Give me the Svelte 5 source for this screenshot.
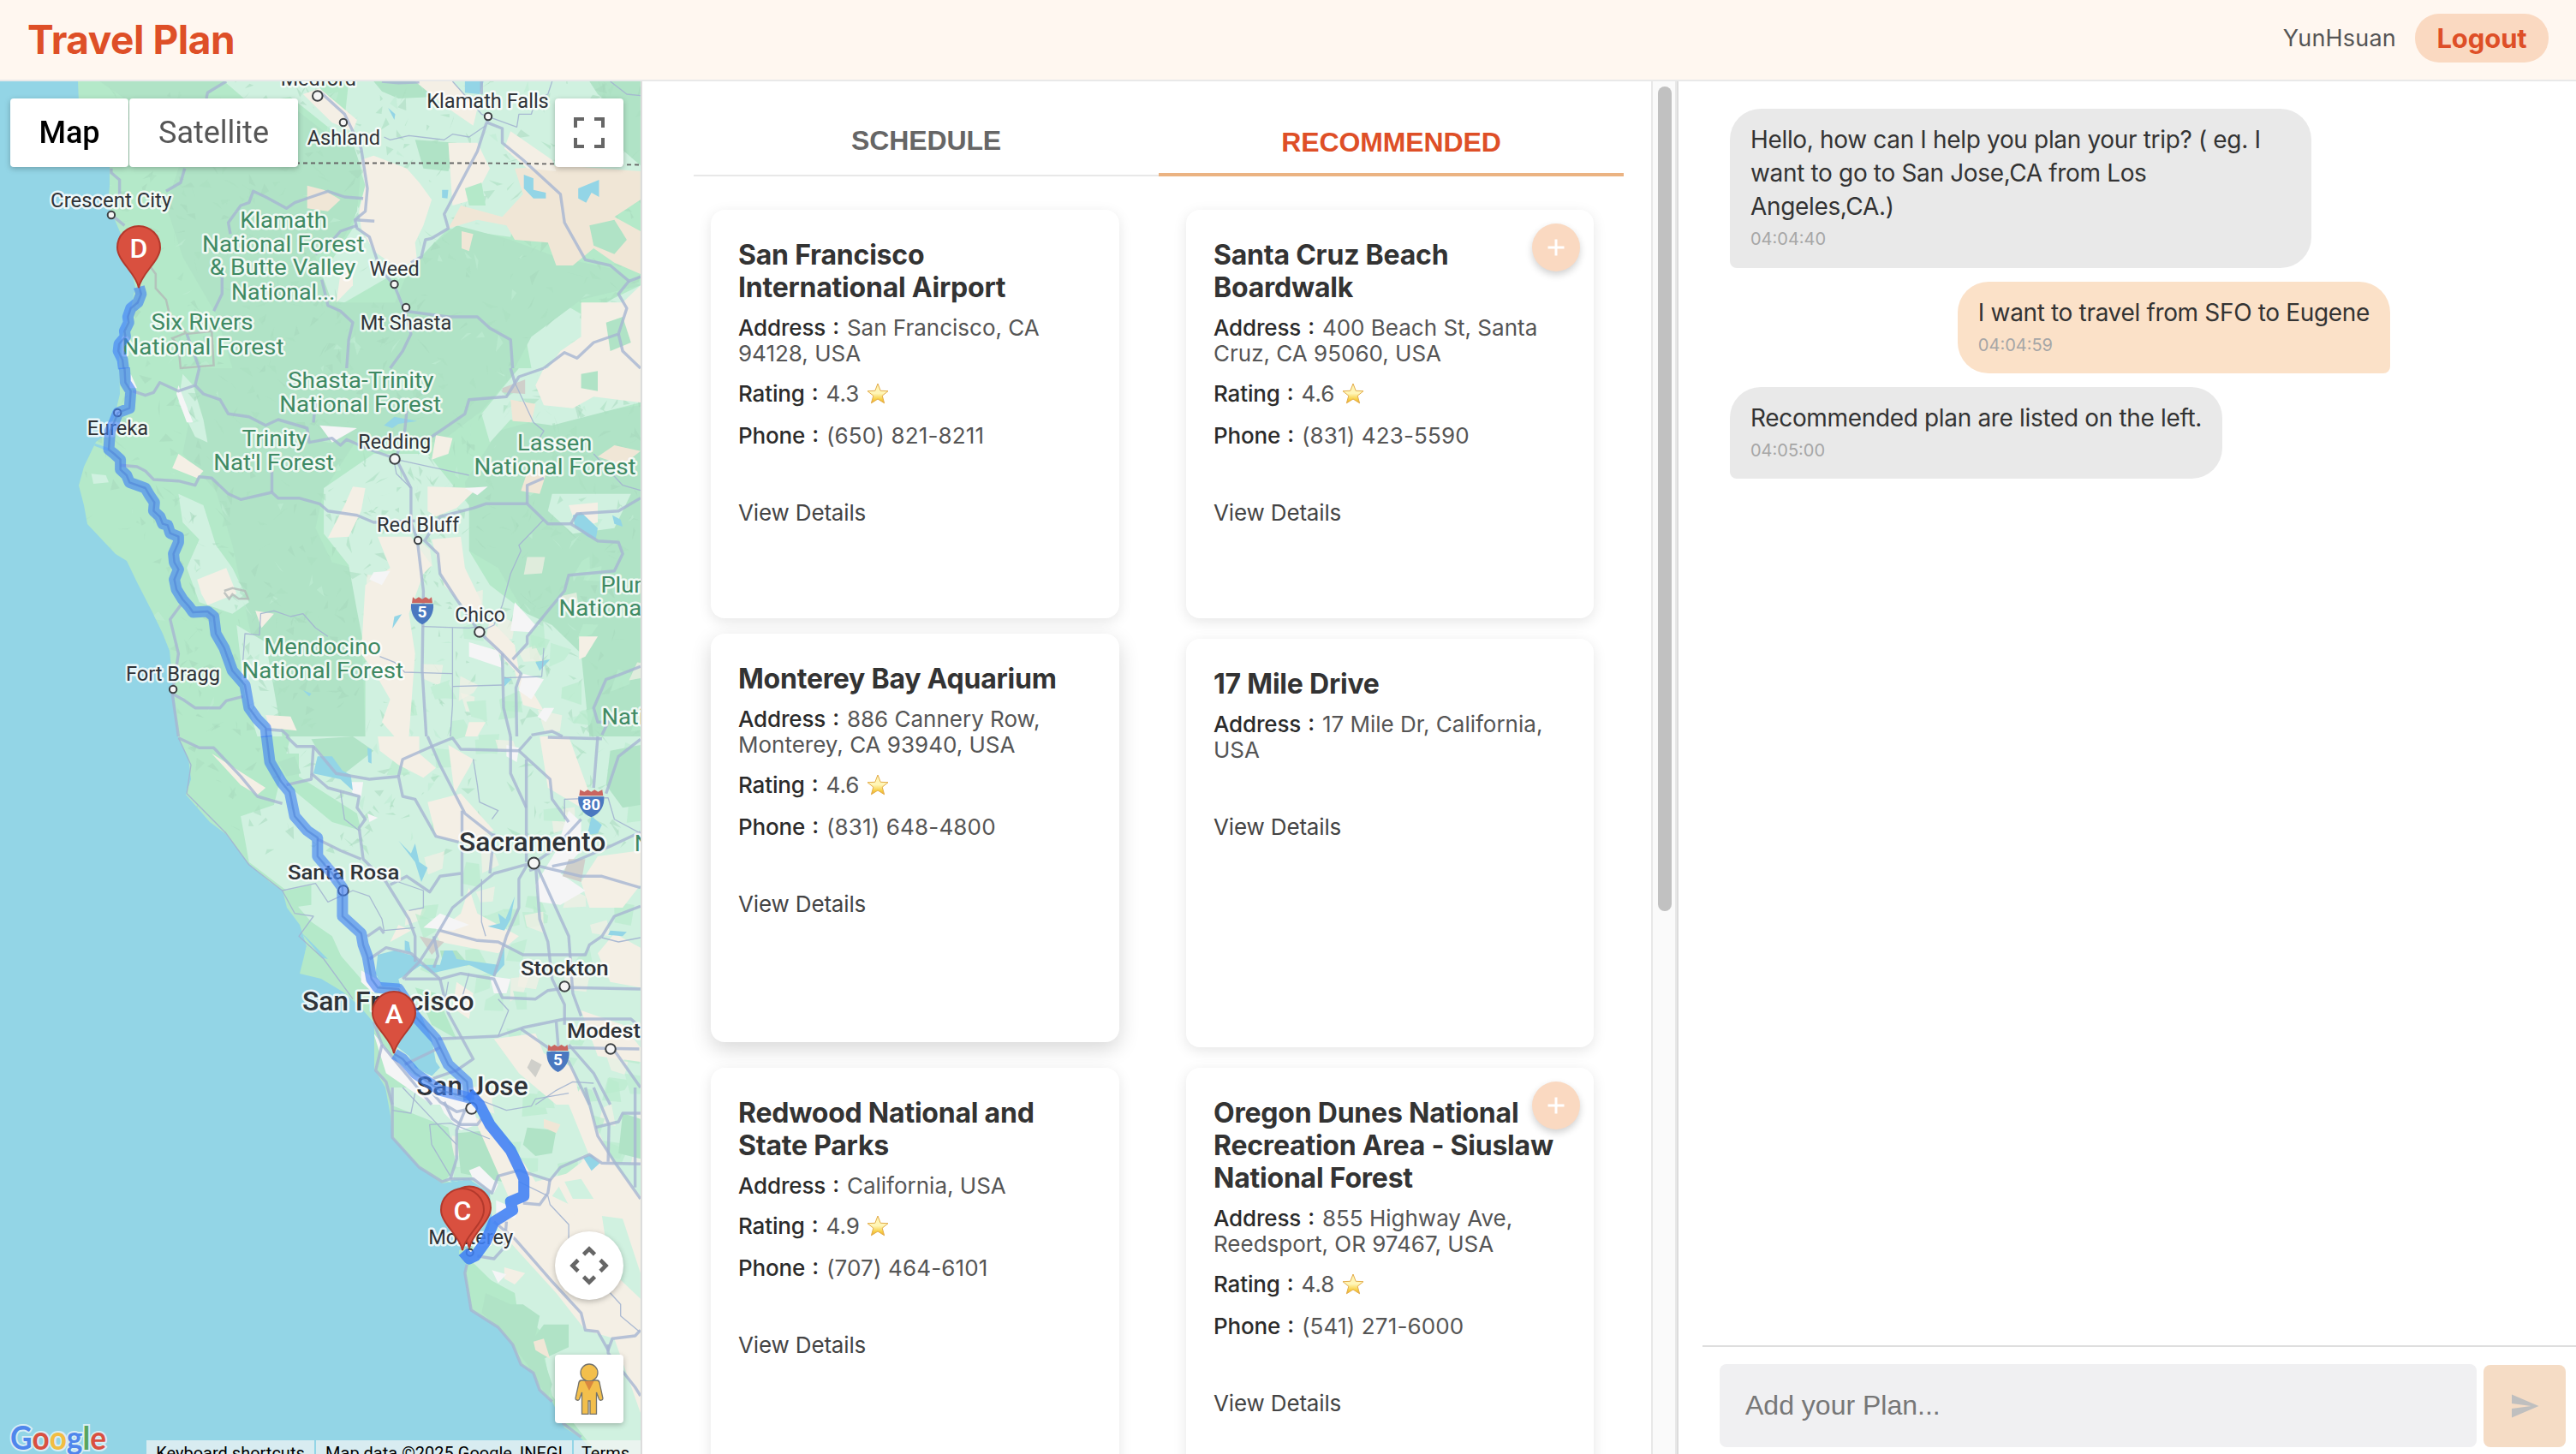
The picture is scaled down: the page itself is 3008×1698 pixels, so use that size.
<script>
  // Map geometry is digitised on four stacked tiles, converted here to page units.
  const tileTop = [0, 430, 860, 1270];
  const px = (x) => +(x / 2.063).toFixed(1);
  const py = (t, y) => +(tileTop[t - 1] + y / 3).toFixed(1);
  const pts = (t, s) =>
    s.split(' ').map((c) => {
      const [x, y] = c.split(',').map(Number);
      return px(x) + ',' + py(t, y);
    }).join(' ');

  const coast =
    '91,95 92,120 110,170 128,195 128,217 126,240 132,252 144,280 158,335 152,365 143,392 139,420 140,460 134,485 124,508 112,516 98,545 92,567 98,590 102,612 135,647 148,655 160,680 178,715 190,740 198,760 203,810 208,860 220,885 223,910 217,928 245,960 265,975 290,1008 315,1030 330,1040 335,1060 350,1080 358,1105 350,1137 375,1143 400,1158 420,1175 437,1195 437,1248 450,1270 456,1303 458,1328 474,1345 490,1363 516,1382 548,1377 572,1393 574,1420 570,1440 550,1456 536,1460 536,1467 545,1477 543,1487 550,1530 582,1550 599,1570 608,1593 623,1603 630,1623 645,1637 659,1667 679,1680 695,1698 750,1698 750,95';

  const base = [
    ['light', 1, '840,285 1543,285 1543,600 1250,700 1230,830 1080,800 960,980 900,900 850,800 880,650 860,560 830,420'],
    ['light', 1, '540,285 760,285 830,430 820,480 700,340 600,360'],
    ['light', 1, '860,720 960,950 830,1060 740,1040 850,800'],
    ['light', 1, '1400,1100 1543,1000 1543,1290 1280,1290 1250,1050 1340,1050'],
    ['dark', 1, '430,590 500,440 600,370 700,370 780,460 850,500 870,590 860,740 830,830 760,900 800,1060 960,1060 1010,1290 560,1290 520,1100 440,900 400,720'],
    ['dark', 1, '1040,860 1100,790 1230,840 1340,900 1470,940 1543,1000 1400,1050 1280,1180 1240,1290 960,1290 940,1100 980,960'],
    ['dark', 1, '900,285 1060,285 1040,340 960,345 920,320'],
    ['dark', 1, '1000,490 1100,500 1080,600 1020,590'],
    ['dark', 1, '1420,285 1543,285 1543,580 1480,500 1500,400 1440,330'],
    ['dark', 1, '240,285 540,285 490,345 300,345'],
    ['dark', 2, '480,0 1250,0 1160,150 1060,260 860,250 780,430 760,560 800,680 850,700 870,860 880,1290 690,1290 640,1150 600,900 560,620 520,430 440,300'],
    ['dark', 2, '1130,520 1120,400 1200,220 1300,180 1543,130 1543,1290 1420,1290 1330,1000 1260,850 1200,700 1130,640'],
    ['light', 2, '780,420 900,300 1030,300 1130,480 1130,640 1180,760 1270,860 1330,900 1400,1000 1420,1290 880,1290 880,1000 860,850 840,690 780,580'],
    ['light', 2, '440,20 430,120 470,240 500,260 490,180 465,60'],
    ['light', 2, '430,440 490,480 520,620 560,700 600,820 560,860 480,820 450,700 480,600 440,540'],
    ['light', 2, '570,900 640,960 680,1290 620,1290 590,1150'],
    ['light', 2, '1250,0 1543,0 1543,120 1330,200 1230,180 1180,260 1160,160'],
    ['light', 2, '1330,440 1520,440 1480,560 1380,580 1320,500'],
    ['light', 2, '220,370 255,375 262,400 225,405'],
    ['light', 3, '700,0 1543,0 1543,1290 1000,1290 960,1150 900,900 720,600 690,540 600,440 580,280 660,240'],
    ['light', 4, '940,0 1543,0 1543,1284 1440,1284 1330,1080 1300,850 1200,700 1130,600 1180,380 1080,330 950,170']
  ];

  const overlay = [
    ['land', 3, '650,60 720,60 720,140 860,270 870,330 800,300 700,180'],
    ['land', 3, '690,540 750,520 750,590 700,600'],
    ['dark', 3, '750,10 850,0 900,50 830,130 770,60'],
    ['land', 3, '740,640 800,700 850,860 790,840 730,830 735,740'],
    ['dark', 3, '1470,50 1543,30 1543,240 1500,250 1460,170'],
    ['dark', 3, '1060,750 1100,750 1130,800 1070,810'],
    ['dark', 3, '670,90 710,70 725,130 690,140'],
    ['land', 3, '1000,880 1050,900 1100,1060 1040,1010'],
    ['land', 4, '940,60 1080,140 1100,280 1070,330 1010,280 945,170'],
    ['dark', 4, '1100,160 1180,150 1220,220 1210,330 1110,300'],
    ['dark', 4, '1270,140 1340,150 1330,230 1290,240 1260,200'],
    ['land', 4, '1260,430 1330,460 1310,530 1240,490'],
    ['land', 4, '1125,630 1240,720 1270,1010 1200,840 1140,780'],
    ['dark', 4, '1170,720 1230,760 1260,760 1300,800 1290,870 1310,830 1370,830 1370,910 1310,950 1330,1040 1320,1090 1270,970 1200,840 1160,790'],
    ['dark', 4, '1500,90 1543,110 1543,250 1490,230'],
    ['beige', 1, '870,560 900,545 980,590 1010,640 1040,700 1020,790 1000,850 1005,920 950,930 900,880 870,800 865,740 880,650'],
    ['sand', 1, '1080,800 1110,720 1210,760 1260,680 1240,590 1350,580 1543,600 1543,700 1480,760 1543,810 1543,960 1480,920 1430,870 1380,930 1340,930 1320,850 1240,840 1220,790 1150,770'],
    ['beige', 1, '730,330 770,310 860,420 850,460 800,430'],
    ['sand', 1, '740,650 780,665 820,700 790,740 740,730'],
    ['beige', 1, '1400,1060 1500,1060 1543,1000 1543,1290 1320,1290 1350,1230 1400,1180'],
    ['dark', 1, '1460,1130 1500,1110 1520,1200 1470,1230'],
    ['dark', 1, '1420,790 1480,770 1510,840 1480,890 1430,860'],
    ['beige', 1, '1000,285 1090,285 1150,380 1140,440 1080,380'],
    ['beige', 1, '1230,460 1330,560 1340,600 1270,590 1215,520'],
    ['sand', 1, '1112,810 1140,820 1130,880 1112,870'],
    ['beige', 1, '1080,500 1150,500 1180,590 1140,700 1090,720'],
    ['land', 1, '1120,660 1160,640 1170,720 1130,720'],
    ['beige', 1, '820,960 850,930 850,1000 810,1060'],
    ['beige', 2, '1310,0 1543,0 1543,120 1430,100 1380,140 1310,130 1290,60'],
    ['dark', 2, '1400,20 1440,10 1440,80 1400,70'],
    ['sand', 2, '1230,110 1290,125 1280,190 1235,185'],
    ['beige', 2, '850,415 880,420 870,500 840,590 790,595 830,480'],
    ['beige', 2, '1030,415 1150,420 1100,490 1050,520 1030,500'],
    ['beige', 2, '1050,235 1090,245 1080,300 1040,320'],
    ['beige', 2, '1040,600 1110,590 1120,700 1160,820 1140,870 1070,760 1055,680'],
    ['beige', 2, '910,590 990,590 1040,690 1020,720 985,860 1000,1000 985,1290 950,1290 920,1240 940,1160 900,1060 870,1000 880,760 940,700'],
    ['beige', 2, '1180,880 1240,970 1250,1060 1290,1150 1310,1200 1260,1180 1240,1060 1170,950'],
    ['beige', 2, '430,300 490,360 475,385 415,350'],
    ['beige', 2, '545,700 570,790 500,830 485,790 475,740'],
    ['beige', 2, '615,850 660,860 630,910'],
    ['sand', 2, '1280,320 1320,350 1300,440 1255,430'],
    ['beige', 2, '1370,480 1440,470 1440,540 1390,560'],
    ['sand', 2, '1440,310 1480,270 1543,290 1500,340'],
    ['beige', 2, '1395,940 1440,940 1410,1010 1395,1020'],
    ['beige', 2, '640,1215 700,1220 715,1270 650,1260'],
    ['beige', 2, '1130,1240 1170,1240 1150,1290 1120,1290'],
    ['beige', 3, '910,0 1010,0 1010,60 1050,110 1020,145 960,100 915,50'],
    ['beige', 3, '1080,30 1140,80 1130,110 1110,160 1095,200'],
    ['beige', 3, '1300,0 1370,0 1400,120 1430,240 1400,250 1320,180'],
    ['beige', 3, '510,60 640,180 620,205 580,170'],
    ['beige', 3, '1030,230 1110,200 1190,330 1110,370 1050,350'],
    ['beige', 3, '1440,420 1543,400 1543,520 1500,600 1420,600 1400,510'],
    ['beige', 3, '1480,690 1543,740 1543,880 1470,860 1440,760'],
    ['beige', 3, '1130,530 1150,620 1250,700 1200,760 1060,720 1050,690 1110,620'],
    ['beige', 3, '960,660 990,680 940,720'],
    ['beige', 3, '1100,860 1140,900 1130,990 1090,950'],
    ['beige', 3, '1190,1060 1290,1040 1310,1110 1380,1160 1400,1290 1340,1290 1250,1180'],
    ['beige', 3, '1400,960 1500,1010 1543,1090 1543,1140 1440,1120'],
    ['beige', 4, '1140,100 1200,150 1260,260 1290,330 1370,300 1330,380 1400,430 1410,520 1543,560 1543,1140 1480,880 1410,850 1340,720 1240,560 1180,460 1230,400'],
    ['beige', 4, '1400,0 1440,150 1480,270 1543,380 1543,600 1410,520 1340,330 1420,240 1370,60'],
    ['light', 4, '1360,330 1400,320 1430,390 1380,390'],
    ['light', 4, '1450,450 1500,460 1543,650 1543,740 1470,640'],
    ['sand', 4, '1310,110 1350,130 1340,160 1310,140'],
    ['sand', 4, '1285,890 1310,880 1325,950 1290,920'],
    ['beige', 4, '1215,630 1265,650 1240,690 1215,670'],
    ['white', 2, '1240,820 1290,900 1280,925 1230,920'],
    ['white', 2, '1130,960 1200,990 1210,1050 1130,1010'],
    ['white', 2, '1260,1070 1310,1090 1280,1160 1250,1130'],
    ['white', 2, '430,60 465,190 450,190 425,90'],
    ['white', 2, '315,20 330,70 312,70'],
    ['white', 2, '770,200 860,210 800,260'],
    ['white', 2, '900,715 940,710 920,760 890,740'],
    ['white', 2, '1120,420 1175,415 1150,445'],
    ['white', 2, '1310,1190 1335,1190 1315,1240 1295,1220'],
    ['white', 3, '1290,520 1340,400 1370,260 1400,300 1400,400 1350,480 1410,540 1350,590 1300,580'],
    ['white', 3, '1060,620 1130,660 1090,680 1020,670'],
    ['white', 3, '1180,840 1230,850 1220,900 1190,900'],
    ['white', 3, '870,820 920,860 900,900 870,860'],
    ['white', 3, '840,160 875,160 870,210 850,200'],
    ['white', 3, '885,270 910,285 890,300'],
    ['white', 3, '1220,30 1250,40 1245,90 1220,70'],
    ['white', 3, '900,1040 950,1130 1000,1190 1100,1290 1040,1290 930,1180'],
    ['white', 4, '1040,0 1140,60 1150,130 1110,150 1070,90'],
    ['white', 4, '1130,290 1155,275 1200,340 1190,370 1140,320'],
    ['white', 4, '1195,395 1250,430 1240,460 1195,440'],
    ['white', 4, '1185,640 1220,655 1200,685'],
    ['grey', 3, '1010,700 1070,720 1040,765'],
    ['grey', 3, '1370,430 1410,430 1400,510 1355,490'],
    ['grey', 3, '1280,1130 1305,1150 1290,1195 1270,1160'],
    ['grey', 2, '1210,70 1265,40 1265,90 1210,85'],
    ['water', 3, '765,70 800,70 825,120 845,135 850,190 820,150 755,130'],
    ['water', 3, '910,765 950,750 1000,770 1015,800 980,835 960,850 965,880 920,875 905,830'],
    ['water', 3, '925,905 1000,930 1040,1060 1050,1140 1060,1160 1040,1190 1000,1160 985,1120 950,1080 940,1000'],
    ['water', 3, '1070,750 1090,750 1100,780 1200,800 1215,740 1215,800 1190,840 1130,800 1040,830 1010,800 1060,800'],
    ['water', 3, '960,365 990,410 1000,375 1010,440 1030,460 1015,510 1000,440'],
    ['water', 3, '1240,560 1230,640 1215,680 1175,665 1205,655 1200,620 1218,640'],
    ['water', 3, '1470,680 1510,685 1500,700 1465,695'],
    ['water', 3, '975,715 985,720 990,760 975,750'],
    ['water', 3, '885,40 895,45 895,95 887,90'],
    ['water', 3, '724,685 735,700 790,780 775,775'],
    ['water', 3, '1425,280 1450,310 1440,340 1415,345'],
    ['water', 4, '1405,245 1425,235 1445,265 1425,292'],
    ['water', 4, '1085,325 1130,318 1150,345 1140,370 1090,350'],
    ['water', 1, '1120,285 1165,285 1155,330 1120,325'],
    ['water', 1, '1262,612 1285,625 1285,665 1315,675 1315,695 1285,695 1262,660'],
    ['water', 1, '1393,660 1443,630 1443,690 1425,675 1412,710 1393,695'],
    ['water', 1, '1065,665 1080,665 1078,695 1065,693'],
    ['water', 1, '935,378 952,400 950,420'],
    ['water', 2, '1380,515 1400,505 1440,560 1435,600 1415,590 1385,555'],
    ['water', 2, '950,170 1005,185 960,195 945,210 925,200'],
    ['water', 2, '1475,515 1495,530 1500,555 1480,545'],
    ['water', 2, '950,870 968,862 945,912'],
    ['water', 2, '1290,1030 1325,1020 1300,1060'],
    ['water', 2, '1215,1080 1232,1090 1215,1115'],
    ['water', 2, '730,1128 750,1140 745,1150'],
    ['water', 2, '225,262 262,280 260,290 228,272']
  ];

  const roads = [
    [1, '545,285 500,325 497,345'],
    [1, '770,320 830,400 870,520 885,660 880,740 855,770 860,800 890,830 915,940 950,1000 975,1090 990,1170 970,1230 940,1290'],
    [1, '1172,420 1175,430 1210,450 1210,500 1260,560 1350,680 1360,780 1410,910 1470,930 1515,985 1543,970'],
    [1, '1172,430 1150,530 1070,750 1080,800 1040,835 1025,840 1015,900 990,920'],
    [1, '1515,985 1490,1030 1510,1080 1490,1170 1430,1200 1390,1255 1360,1235 1310,1290'],
    [1, '1490,1170 1500,1230 1543,1290'],
    [1, '445,590 435,640 400,670'],
    [1, '875,695 830,690 790,670 750,690 710,710 690,730 640,690 610,670 600,710 580,720 550,780 555,820'],
    [1, '855,770 902,775'],
    [1, '860,790 820,810 790,860 760,890'],
    [1, '535,970 535,1030 515,1090'],
    [1, '775,980 790,1070 820,1090 850,1130 840,1190 835,1290'],
    [1, '975,1090 1080,1110 1150,1110 1180,1150 1230,1190 1235,1290'],
    [1, '268,590 268,605 288,630 288,690'],
    [1, '270,755 300,790'],
    [1, '450,1170 480,1290'],
    [1, '920,285 960,290 1010,287'],
    [1, '1160,285 1160,330'],
    [2, '320,80 350,95 370,85 385,50 430,80 470,60 480,0'],
    [2, '470,60 490,90 530,110 550,160 600,170 640,200 670,180 740,210 745,260 800,245 820,270 835,250 890,285 950,315'],
    [2, '755,190 760,120'],
    [2, '290,340 330,345 350,360 370,390 430,395 470,410 480,380 510,385 550,440 580,460 655,435 670,455 720,455 770,475 790,500 860,515 900,540 1000,535'],
    [2, '655,435 655,360'],
    [2, '955,320 990,420 990,540 1005,600 1020,780 1017,1060 1027,1290'],
    [2, '1020,600 1055,650 1060,720 1100,810 1155,925 1210,1000 1255,1070 1243,1120 1245,1290'],
    [2, '1210,1000 1213,1190 1230,1290'],
    [2, '1025,600 1060,520 1140,490 1170,475 1270,475 1320,545 1375,545 1440,605 1490,610 1500,650 1480,710 1370,725 1360,780 1320,850 1270,940 1270,965 1235,1020'],
    [2, '1375,545 1390,510 1490,500 1543,455'],
    [2, '1270,475 1270,410 1310,385'],
    [2, '1310,0 1250,30 1220,100 1130,110 1120,160 1060,220 1040,240'],
    [2, '1230,0 1240,50'],
    [2, '435,830 410,880 430,1000 415,1140 430,1290'],
    [2, '415,1140 440,1160 470,1190 530,1190 545,1165 585,1150'],
    [2, '980,150 975,220 955,310'],
    [2, '642,1265 680,1270 695,1290'],
    [2, '1543,1045 1490,1075 1460,1090 1430,1190 1440,1240 1465,1240 1450,1285'],
    [2, '1280,1285 1330,1272 1355,1290'],
    [3, '430,5 480,40 515,40 580,140 620,210 680,235'],
    [3, '690,0 715,35 755,35 810,130 890,150 960,140 970,210 1000,220 1050,350 1105,370'],
    [3, '1030,0 1060,100 1120,270 1190,350'],
    [3, '755,35 750,150 690,170'],
    [3, '750,130 790,180 865,210 860,250 880,290 865,320 875,430 930,510 985,640 1000,700 1000,790'],
    [3, '960,140 970,80 1040,35 1090,5 1110,45 1250,50 1325,150 1330,220 1370,300'],
    [3, '1230,0 1230,130 1268,250'],
    [3, '1268,80 1268,440'],
    [3, '1280,0 1250,50'],
    [3, '1320,3 1450,8'],
    [3, '1400,290 1330,400 1290,440 1190,480 1090,600 1050,700 1010,790 970,850'],
    [3, '1290,445 1300,640 1320,720 1330,850 1360,940 1360,1010'],
    [3, '1275,470 1295,460 1370,700 1380,900 1400,980'],
    [3, '1285,450 1400,490 1450,490 1543,530'],
    [3, '1330,455 1380,440 1470,385 1543,335'],
    [3, '1270,450 1250,500 1250,600 1220,700 1190,840'],
    [3, '1060,680 1150,715 1200,720 1260,765 1410,765 1420,730 1450,700 1480,630 1543,595'],
    [3, '765,360 820,400 870,430'],
    [3, '890,780 930,740 990,760 1060,850 1110,830 1190,850 1210,915 1290,920 1320,890 1370,880 1543,885'],
    [3, '1060,850 1080,970 1140,1130 1100,1170 1040,1200'],
    [3, '975,850 1060,850'],
    [3, '1055,1060 1200,1050 1260,1020 1360,990 1520,990 1543,1020'],
    [3, '1340,1000 1345,1090 1540,1095'],
    [3, '1255,1025 1370,1140 1420,1290'],
    [3, '1370,1080 1430,1180 1470,1290'],
    [3, '1480,1100 1543,1230'],
    [3, '900,1000 920,1080 905,1170 930,1210 945,1290'],
    [3, '920,1080 960,1150 1040,1290'],
    [3, '975,1150 1060,1090'],
    [3, '1113,260 1113,560'],
    [3, '940,520 980,490 1000,510 1035,545 1060,490 1110,480'],
    [3, '1190,340 1180,480'],
    [3, '1045,700 1055,770 1045,810'],
    [3, '885,700 915,670 925,690'],
    [3, '1440,0 1430,180'],
    [3, '1543,10 1490,70 1460,200'],
    [4, '945,0 945,175 1010,280 1065,330 1085,320 1140,320 1185,370 1200,310 1250,290 1325,325 1350,280 1420,235 1450,265 1543,268'],
    [4, '1325,320 1320,370 1300,410 1260,405'],
    [4, '1030,0 1060,50 1100,85 1130,75'],
    [4, '1070,50 1090,110 1110,130 1150,130 1160,110'],
    [4, '1120,80 1100,150 1100,250 1085,320'],
    [4, '1410,0 1440,170 1480,260 1543,390'],
    [4, '1430,0 1467,130 1465,260'],
    [4, '1435,140 1490,120 1500,90 1543,90'],
    [4, '1530,0 1530,350'],
    [4, '1190,470 1240,530 1330,680 1400,790 1410,850 1440,855 1465,920 1475,880 1530,870 1543,850'],
    [4, '1465,900 1465,930 1530,1050 1543,1080'],
    [4, '1150,590 1190,600 1215,560 1220,470'],
    [4, '1125,620 1120,650 1135,780 1200,840 1235,900 1255,970 1285,1000 1300,1060 1330,1100'],
    [4, '1355,1175 1400,1225']
  ];

  const lanes = [
    [1, '925,480 940,490 985,475 1070,490 1090,470 1130,480 1170,440'],
    [1, '1090,285 1130,350 1160,400 1245,445 1250,400 1280,400 1290,350 1320,330 1330,285'],
    [1, '1470,285 1510,330 1543,335'],
    [2, '955,320 1130,375'],
    [2, '950,330 955,370 990,420'],
    [2, '1240,50 1285,190 1310,220 1280,290'],
    [2, '1430,300 1500,410 1543,428'],
    [2, '1310,530 1250,620 1255,640 1230,720 1210,830 1190,900 1160,920'],
    [2, '1017,905 1130,910 1155,905'],
    [2, '1090,910 1090,1180 1085,1290'],
    [2, '915,1010 950,1030 975,1065 1090,1070'],
    [2, '1090,1115 1210,1110'],
    [2, '1215,1085 1305,1080 1310,980'],
    [2, '585,1030 590,930 625,935 628,860 660,850 700,870 730,860 760,910 790,940'],
    [3, '430,5 460,100 450,200 545,340 600,450 680,540 710,620 755,630 720,700 780,780 850,920'],
    [3, '680,540 760,515 790,580 850,540 890,560 920,640 925,680 1000,670'],
    [3, '1140,80 1150,170 1155,230 1200,260 1185,290'],
    [3, '1543,340 1480,290 1465,215 1360,220 1360,290'],
    [3, '1160,500 1160,650 1170,700'],
    [3, '820,190 830,290 865,330'],
    [3, '1080,860 1070,940'],
    [3, '1130,830 1110,930'],
    [3, '1200,920 1225,960 1200,1050'],
    [3, '1450,705 1490,720 1543,705'],
    [3, '1290,1290 1340,1240 1380,1210 1430,1215'],
    [3, '985,610 1020,600 1020,540 960,510'],
    [4, '970,0 1100,200'],
    [4, '1085,310 1040,200 1035,130 1085,125 1180,180'],
    [4, '1150,40 1220,80 1280,65 1290,40 1370,20'],
    [4, '1250,330 1320,380 1325,410 1370,480 1370,530'],
    [4, '1470,720 1495,760 1495,800 1540,855'],
    [4, '945,80 990,90 1000,20']
  ];

  // Boundaries of closed or restricted areas
  const trails = [
    [1, '355,920 375,960 375,1010 400,1050 408,1100 450,1170 510,1160 515,1280 435,1290 430,1210 415,1185 450,1165'],
    [2, '540,780 560,770 590,780 598,808 575,808 560,792 552,808 540,785']
  ];

  const route = [
    [1, '335,1005 340,1030 332,1060 315,1080 308,1110 310,1130 300,1160 302,1180 287,1205 285,1230 295,1260 298,1292'],
    [2, '300,-2 302,50 315,80 312,140 284,156 275,190 265,220 262,285 275,300 290,320 290,355 305,375 312,400 335,412 350,420 360,445 372,470 370,500 385,520 392,545 404,550 410,578 430,590 430,610 418,650 420,680 430,705 420,740 425,775 440,810 455,835 465,855 500,852 515,870 520,930 540,980 560,1060 590,1110 600,1190 620,1230 640,1260 642,1292'],
    [3, '642,-2 650,90 678,160 698,195 710,280 740,330 765,355 765,420 800,480 825,530 825,630 870,690 875,730 885,770 895,850 910,880 960,885 980,930 1000,980 1050,1060 1080,1150 1125,1210 1130,1275'],
    [3, '950,1112 970,1130 1000,1180 1060,1240 1135,1268']
  ];
  const routeStrong = '1130,20 1155,60 1180,130 1230,220 1250,280 1262,320 1262,380 1230,400 1235,430 1190,470 1170,540 1145,590 1130,600 1115,575';

  const labels = [
    [1, 676, 858, 300, 'Medford', 'town'], [1, 1028, 1322, 378, 'Klamath Falls', 'town'],
    [1, 740, 916, 508, 'Ashland', 'town'], [1, 122, 413, 725, 'Crescent City', 'town'],
    [1, 890, 1010, 967, 'Weed', 'town'], [1, 868, 1088, 1156, 'Mt Shasta', 'town'],
    [2, 210, 357, 235, 'Eureka', 'town'], [2, 863, 1038, 283, 'Redding', 'town'],
    [2, 908, 1106, 574, 'Red Bluff', 'town'], [2, 1096, 1217, 888, 'Chico', 'town'],
    [2, 303, 530, 1096, 'Fort Bragg', 'town'], [3, 693, 962, 502, 'Santa Rosa', 'town mid'],
    [3, 1254, 1466, 838, 'Stockton', 'town mid'], [3, 1366, 1543, 1057, 'Modest', 'town mid'],
    [3, 1106, 1459, 402, 'Sacramento', 'city'], [3, 728, 1142, 960, 'San Francisco', 'city'],
    [3, 1003, 1272, 1258, 'San Jose', 'city'], [4, 1032, 1236, 550, 'Monterey', 'town'],
    [1, 578, 788, 797, 'Klamath', 'park'], [1, 487, 878, 881, 'National Forest', 'park'],
    [1, 505, 857, 964, '& Butte Valley', 'park'], [1, 557, 807, 1049, 'National...', 'park'],
    [1, 364, 610, 1156, 'Six Rivers', 'park'], [1, 294, 684, 1241, 'National Forest', 'park'],
    [2, 693, 1045, 68, 'Shasta-Trinity', 'park'], [2, 673, 1063, 152, 'National Forest', 'park'],
    [2, 583, 740, 272, 'Trinity', 'park'], [2, 514, 804, 356, "Nat'l Forest", 'park'],
    [2, 1246, 1426, 288, 'Lassen', 'park'], [2, 1142, 1532, 371, 'National Forest', 'park'],
    [2, 1447, 1636, 785, 'Plumas', 'park'], [2, 1346, 1736, 867, 'National Forest', 'park'],
    [2, 636, 918, 1003, 'Mendocino', 'park'], [2, 583, 972, 1087, 'National Forest', 'park'],
    [2, 1449, 1660, 1248, 'National', 'park'], [3, 1528, 1739, 402, 'National', 'park']
  ];

  const dots = [
    [1, 765, 336, 5.8], [1, 827, 429, 4.2], [1, 1176, 408, 4.2], [1, 268, 753, 4.2], [1, 950, 996, 4.2],
    [1, 978, 1077, 4.2], [2, 283, 156, 4.2], [2, 951, 318, 5.8], [2, 1007, 603, 4.2], [2, 1155, 924, 5.8],
    [2, 417, 1125, 4.2], [3, 827, 540, 5.8], [3, 1286, 444, 6.5], [3, 1360, 876, 5.8], [3, 1471, 1095, 5.8],
    [4, 1136, 73, 6.5], [4, 1132, 578, 4]
  ];

  const shields = [[2, 1017, 850, '5', 13], [3, 1424, 235, '80', 15], [3, 1344, 1128, '5', 13]];

  // Relief facets and farmland patches: small deterministic polygons.
  let seed = 7;
  const rnd = () => (seed = (seed * 16807) % 2147483647) / 2147483647;
  const facets = Array.from({ length: 1300 }, () => {
    const x = 100 + rnd() * 650, y = 95 + rnd() * 900;
    const r = () => (rnd() - 0.5) * 22;
    const k = rnd();
    return {
      d: `${x},${y} ${x + r()},${y + r()} ${x + r()},${y + r()}`,
      c: k < 0.45 ? 'f1' : k < 0.85 ? 'f2' : 'f3'
    };
  });
  const patches = Array.from({ length: 120 }, () => {
    const y = 640 + rnd() * 740, x = 430 + (y - 640) * 0.12 + rnd() * 310;
    const r = () => 4 + rnd() * 12;
    const k = rnd();
    return {
      d: `${x - r()},${y - r()} ${x + r()},${y - r()} ${x + r()},${y + r()} ${x - r()},${y + r()}`,
      c: k < 0.4 ? 'p1' : k < 0.7 ? 'p2' : 'p3'
    };
  });

  const pins = [[548, 1458.5, ''], [540, 1461, 'C'], [460, 1231, 'A'], [162, 337, 'D']];

  const places = [
    { name: 'San Francisco International Airport', address: 'San Francisco, CA 94128, USA', rating: '4.3', phone: '(650) 821-8211' },
    { name: 'Santa Cruz Beach Boardwalk', address: '400 Beach St, Santa Cruz, CA 95060, USA', rating: '4.6', phone: '(831) 423-5590', add: true },
    { name: 'Monterey Bay Aquarium', address: '886 Cannery Row, Monterey, CA 93940, USA', rating: '4.6', phone: '(831) 648-4800', raised: true },
    { name: '17 Mile Drive', address: '17 Mile Dr, California, USA' },
    { name: 'Redwood National and State Parks', address: 'California, USA', rating: '4.9', phone: '(707) 464-6101' },
    { name: 'Oregon Dunes National Recreation Area - Siuslaw National Forest', address: '855 Highway Ave, Reedsport, OR 97467, USA', rating: '4.8', phone: '(541) 271-6000', add: true }
  ];

  const messages = [
    { text: 'Hello, how can I help you plan your trip? ( eg. I want to go to San Jose,CA from Los Angeles,CA.)', time: '04:04:40' },
    { text: 'I want to travel from SFO to Eugene', time: '04:04:59', mine: true },
    { text: 'Recommended plan are listed on the left.', time: '04:05:00' }
  ];
</script>

{#snippet label(text)}<b>{text}<span class="colon">:</span></b>{/snippet}

<div class="app">
  <header>
    <h1>Travel Plan</h1>
    <div class="account">
      <span class="user">YunHsuan</span>
      <button class="logout">Logout</button>
    </div>
  </header>

  <main>
    <section class="map">
      <svg class="canvas" viewBox="0 95 748 1603" width="748" height="1603">
        <defs>
          <clipPath id="land"><polygon points={coast} /></clipPath>
        </defs>
        <rect x="0" y="95" width="748" height="1603" fill="#93d5e6" />
        <g clip-path="url(#land)">
          <rect x="0" y="95" width="748" height="1603" class="land" />
          {#each base as [k, t, s]}
            <polygon class={k} points={pts(t, s)} />
          {/each}
          {#each facets as f}<polygon class={f.c} points={f.d} />{/each}
          {#each patches as f}<polygon class={f.c} points={f.d} />{/each}
          {#each overlay as [k, t, s]}
            <polygon class={k} points={pts(t, s)} />
          {/each}
        </g>
        {#each trails as [t, s]}<polyline class="trail" points={pts(t, s)} />{/each}
        {#each lanes as [t, s]}<polyline class="lane" points={pts(t, s)} />{/each}
        {#each roads as [t, s]}<polyline class="road" points={pts(t, s)} />{/each}
        <path class="border" d="M345 190.5H560L748 192.5" />

        {#each shields as [t, x, y, n, w]}
          <g transform="translate({px(x)} {py(t, y)})">
            <path d="M{-w + 1} -9 L{-w + 2} -16 L-8 -13.5 L-4 -16 L0 -13.5 L4 -16 L8 -13.5 L{w - 2} -16 L{w - 1} -9Z" fill="#c96560" />
            <path d="M{-w} -8H{w}C{w + 1} 2 {w - 4} 12 0 16C{-w + 4} 12 {-w - 1} 2 {-w} -8Z" fill="#4a78c0" />
            <text class="shield" y="8">{n}</text>
          </g>
        {/each}
        {#each dots as [t, x, y, r]}<circle class="dot" cx={px(x)} cy={py(t, y)} {r} />{/each}
        {#each labels as [t, x1, x2, y, s, k]}
          <text class="label {k}" x={px(x1)} y={py(t, y)} textLength={px(x2 - x1)} lengthAdjust="spacingAndGlyphs">{s}</text>
        {/each}

        {#each route as [t, s]}
          <polyline class="route" points={pts(t, s)} />
          <polyline class="route-core" points={pts(t, s)} />
        {/each}
        <polyline class="route strong" points={pts(4, routeStrong)} />

        {#each pins as [x, y, l]}
          <g transform="translate({x} {y})">
            <path class="pin" d="M0 -1C-3 -18 -25 -32 -25 -48A25 25 0 0 1 25 -48C25 -32 3 -18 0 -1Z" />
            <text class="pin-letter" y="-36">{l}</text>
          </g>
        {/each}

        <text class="google" x="12" y="1693" textLength="112" lengthAdjust="spacingAndGlyphs"><tspan fill="#4f86ec">G</tspan><tspan fill="#d95040">o</tspan><tspan fill="#f2bd42">o</tspan><tspan fill="#4f86ec">g</tspan><tspan fill="#58a55c">l</tspan><tspan fill="#d95040">e</tspan></text>
      </svg>

      <div class="types">
        <button class="active">Map</button>
        <button>Satellite</button>
      </div>
      <button class="ctl full" aria-label="Toggle fullscreen">
        <svg viewBox="0 0 18 18" width="36" height="36"><path fill="#666" d="M0 0v6h2V2h4V0H0zm16 0h-4v2h4v4h2V0h-2zm0 16h-4v2h6v-6h-2v4zM2 12H0v6h6v-2H2v-4z" /></svg>
      </button>
      <button class="ctl pan" aria-label="Map camera controls">
        <svg viewBox="-24 -24 48 48" width="48" height="48" fill="none" stroke="#666" stroke-width="4.6"><path d="M-6.500 -13L0 -19.500L6.500 -13M-6.500 13L0 19.500L6.500 13M-13 -6.500L-19.500 0L-13 6.500M13 -6.500L19.500 0L13 6.500" /></svg>
      </button>
      <button class="ctl peg" aria-label="Street View">
        <svg viewBox="0 0 36 60" width="36" height="60">
          <g fill="#f3bf4c" stroke="#74736c" stroke-width="1.3">
            <path d="M9 20H27C30 20 30 22 30.500 25L34 41C34 43.500 30.500 44 29.500 42L26.500 34V59.500H19V44H17V59.500H9.500V34L6.500 42C5.500 44 2 43.500 2 41L5.500 25C6 22 6 20 9 20Z" />
            <circle cx="18" cy="11" r="10" />
          </g>
          <path d="M12.500 21H23.500L18 32Z" fill="#d9873f" />
        </svg>
      </button>
      <div class="legal">
        <span class="keys">Keyboard shortcuts</span>
        <span class="data">Map data ©2025 Google, INEGI</span>
        <span class="terms">Terms</span>
      </div>
    </section>

    <section class="plans">
      <div class="content">
        <nav>
          <button>SCHEDULE</button>
          <button class="on">RECOMMENDED</button>
        </nav>
        <div class="cards">
          {#each places as p}
            <article class:raised={p.raised}>
              <h2>{p.name}</h2>
              <p>{@render label('Address')}{p.address}</p>
              {#if p.rating}
                <p class="rating">{@render label('Rating')}{p.rating}
                  <svg class="star" viewBox="0 0 26 25" width="26" height="25">
                    <defs><linearGradient id="gold" x1="0" y1="0" x2="0" y2="1"><stop offset="0" stop-color="#fff3b0" /><stop offset=".5" stop-color="#fff6b8" /><stop offset=".8" stop-color="#f8d045" /><stop offset="1" stop-color="#e9a52d" /></linearGradient></defs>
                    <path d="M13 1L16.200 9.300L25 9.700L18.200 15.200L20.600 23.800L13 19L5.400 23.800L7.800 15.200L1 9.700L9.800 9.300Z" fill="url(#gold)" stroke="#e3ad4b" stroke-width="1" stroke-linejoin="round" />
                  </svg>
                </p>
                <p class="phone">{@render label('Phone')}{p.phone}</p>
              {/if}
              <a class="details">View Details</a>
              {#if p.add}
                <button class="add" aria-label="Add">
                  <svg viewBox="0 0 20 20" width="20" height="20"><path d="M10 .5V19.500M.5 10H19.500" stroke="#fff" stroke-width="3" /></svg>
                </button>
              {/if}
            </article>
          {/each}
        </div>
      </div>
      <div class="scroll"><div class="thumb"></div></div>
    </section>

    <section class="chat">
      <div class="log">
        {#each messages as m}
          <div class="bubble" class:mine={m.mine}>
            <p>{m.text}</p>
            <time>{m.time}</time>
          </div>
        {/each}
      </div>
      <div class="composer">
        <div class="field">Add your Plan...</div>
        <button class="send" aria-label="Send">
          <svg viewBox="0 0 24 24" width="36" height="36"><path fill="#bfbfbf" d="M2.010 21L23 12 2.010 3 2 10l15 2-15 2z" /></svg>
        </button>
      </div>
    </section>
  </main>
</div>

<style>
  :global(body) { margin: 0; overflow: hidden; background: #fff; }
  * { box-sizing: border-box; }
  button { border: 0; background: none; padding: 0; font: inherit; color: inherit; }
  h1, h2, p { margin: 0; }
  .app { width: 3008px; height: 1698px; display: flex; flex-direction: column; overflow: hidden; font-family: Inter, "Liberation Sans", sans-serif; color: #333; background: #fff; }

  header { flex: none; height: 95px; padding: 0 32px; display: flex; justify-content: space-between; background: #fff7f0; border-bottom: 2px solid #e9e9e9; }
  h1 { font-size: 46px; line-height: 93px; font-weight: 700; letter-spacing: -0.45px; color: #de4f27; }
  .account { display: flex; align-items: flex-start; gap: 22px; padding-top: 16px; }
  .user { font-size: 27px; line-height: 58px; letter-spacing: 0.2px; color: #555; }
  .logout { width: 156px; height: 57px; border-radius: 28px; background: #fad9c1; color: #de4f27; font-size: 31px; font-weight: 700; line-height: 55px; letter-spacing: -0.1px; }

  main { flex: 1; min-height: 0; display: flex; }

  .map { position: relative; flex: none; width: 750px; border-right: 2px solid #dcdcdc; overflow: hidden; font-family: Roboto, sans-serif; }
  .canvas { display: block; }
  .land { fill: #b4e9c9; }
  .dark { fill: #b0e3c6; }
  .light { fill: #d0f1e0; }
  .beige { fill: #f4efe5; }
  .sand { fill: #f0e6d6; }
  .white { fill: #f5f5f6; }
  .grey { fill: #cfcfca; }
  .water { fill: #93d5e6; }
  .f1 { fill: #abdfc2; opacity: 0.6; }
  .f2 { fill: #a5d8bb; opacity: 0.5; }
  .f3 { fill: #c0ecd3; opacity: 0.6; }
  .p1 { fill: #b9ebcd; opacity: 0.7; }
  .p2 { fill: #f4efe5; opacity: 0.7; }
  .p3 { fill: #c3eed6; }
  .trail { fill: none; stroke: #b3b9b8; stroke-width: 2.5; opacity: 0.8; }
  .road { fill: none; stroke: #a6b5d2; stroke-width: 3.4; stroke-linejoin: round; opacity: 0.8; }
  .lane { fill: none; stroke: #a3b4d0; stroke-width: 1.3; stroke-linejoin: round; opacity: 0.9; }
  .border { fill: none; stroke: #666; stroke-width: 1.8; stroke-dasharray: 5 4; }
  .dot { fill: #f5f5f5; stroke: #3c4043; stroke-width: 2; }
  .label { paint-order: stroke; stroke: rgba(255, 255, 255, 0.8); stroke-width: 5px; stroke-linejoin: round; fill: #2f3338; }
  .town { font-size: 24px; }
  .mid { font-weight: 500; }
  .city { font-size: 31px; font-weight: 500; }
  .park { font-size: 26px; fill: #3f8a64; }
  .shield { fill: #fff; font-size: 19px; font-weight: 700; text-anchor: middle; }
  .route { fill: none; stroke: #3f80f5; stroke-width: 13; stroke-linejoin: round; stroke-linecap: butt; opacity: 0.62; }
  .route-core { fill: none; stroke: #4c7fd6; stroke-width: 2.4; stroke-linejoin: round; opacity: 0.55; }
  .route.strong { opacity: 0.88; }
  .pin { fill: #d9503f; stroke: #b3392c; stroke-width: 2; }
  .pin-letter { fill: #fff; font-size: 32px; font-weight: 500; text-anchor: middle; }
  .google { font-family: Lato, sans-serif; font-size: 38px; font-weight: 700; paint-order: stroke; stroke: #d8eef5; stroke-width: 4px; }

  .types { position: absolute; left: 12px; top: 20px; display: flex; gap: 1px; filter: drop-shadow(0 2px 3px rgba(0, 0, 0, 0.25)); }
  .types button { height: 80px; width: 197px; border-radius: 4px; background: #fff; font-size: 36px; color: #565656; }
  .types .active { width: 138px; font-weight: 500; color: #000; }
  .ctl { position: absolute; right: 20px; width: 80px; height: 80px; display: flex; align-items: center; justify-content: center; background: #fff; border-radius: 4px; box-shadow: 0 2px 6px rgba(0, 0, 0, 0.25); }
  .full { top: 20px; }
  .pan { top: 1343px; border-radius: 50%; }
  .peg { top: 1487px; }
  .legal { position: absolute; right: 0; top: 1587px; height: 32px; display: flex; gap: 2px; font-size: 20px; line-height: 30px; color: #000; white-space: nowrap; }
  .legal span { background: rgba(245, 245, 245, 0.7); text-align: center; }
  .keys { width: 196px; }
  .data { width: 299px; }
  .terms { width: 78px; padding-right: 4px; }

  .plans { flex: none; width: 1208px; display: flex; }
  .content { flex: 1; padding: 27px 32px 0 60px; }
  nav { display: flex; height: 84px; }
  nav button { flex: 1; height: 84px; padding-top: 3px; border-bottom: 2px solid #e8e8e8; font: 700 32px/79px "Liberation Sans", sans-serif; color: #666; letter-spacing: -0.1px; }
  nav .on { border-bottom: 4px solid #ebb382; color: #de4f27; padding-top: 5px; }
  .cards { display: grid; grid-template-columns: 477px 476px; column-gap: 78px; row-gap: 24px; padding: 39px 0 0 20px; }
  article { position: relative; height: 477px; padding: 33.6px 30px 0 32px; border-radius: 16px; background: #fff; box-shadow: 0 4px 16px rgba(0, 0, 0, 0.1); font-size: 26px; line-height: 30px; color: #555; display: flex; flex-direction: column; align-items: flex-start; }
  article.raised { transform: translateY(-6px); box-shadow: 0 8px 24px rgba(0, 0, 0, 0.16); }
  h2 { font-size: 32px; line-height: 38px; font-weight: 700; letter-spacing: -0.22px; color: #333; margin-bottom: 13.6px; }
  article p { margin-bottom: 17px; }
  article p.rating { margin-bottom: 19px; }
  article b { font-weight: 500; color: #2b2b2b; letter-spacing: -0.15px; }
  .colon { margin: 0 9px 0 8px; position: relative; top: -2px; }
  .phone { letter-spacing: 0.15px; }
  .star { display: inline-block; margin-left: 1px; vertical-align: -3px; }
  .details { margin-top: 43px; color: #444; letter-spacing: -0.15px; }
  .add { position: absolute; right: 16px; top: 16px; width: 56px; height: 56px; border-radius: 50%; display: flex; align-items: center; justify-content: center; background: #fad9c1; box-shadow: 0 4px 8px rgba(0, 0, 0, 0.18); }
  .scroll { flex: none; width: 30px; padding: 6px; background: #fafafa; border-left: 2px solid #e8e8e8; border-right: 2px solid #e8e8e8; }
  .thumb { width: 16px; height: 963px; border-radius: 8px; background: #c1c1c1; }

  .chat { flex: 1; border-left: 2px solid #dcdcdc; display: flex; flex-direction: column; }
  .log { flex: 1; display: flex; flex-direction: column; align-items: flex-start; gap: 16px; padding: 32px 217px 0 60px; }
  .bubble { max-width: 679px; padding: 17px 24px 0; height: 107px; border-radius: 36px 36px 36px 8px; background: #e9e9e9; font-size: 28px; line-height: 39px; letter-spacing: -0.34px; }
  .bubble:first-child { height: 186px; width: 679px; }
  .bubble.mine { align-self: flex-end; border-radius: 36px 36px 8px 36px; background: #fbe1c8; }
  time { display: block; padding-top: 4px; font-size: 20px; line-height: 28px; letter-spacing: 0; color: #a6a6a6; }
  .composer { flex: none; height: 127px; margin-left: 28px; padding: 20px 12px 8px 20px; border-top: 2px solid #dedede; display: flex; align-items: flex-end; gap: 8px; }
  .field { width: 884px; height: 97px; border-radius: 8px; background: #f0f0f2; padding-left: 30px; font: 32px/97px "Liberation Sans", sans-serif; color: #777; }
  .send { width: 96px; height: 96px; border-radius: 8px; background: #f5dcc5; display: flex; align-items: center; justify-content: center; }
</style>
